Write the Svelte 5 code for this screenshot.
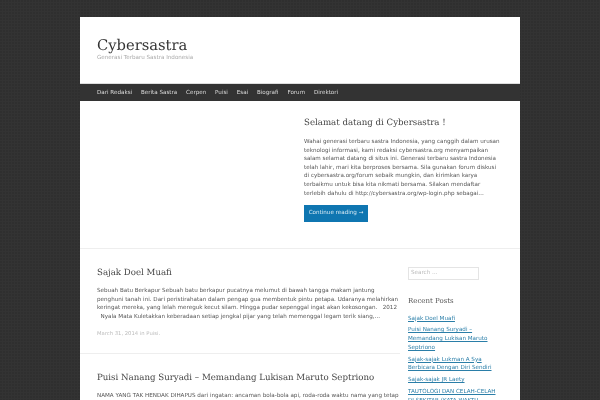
<script>
  const menu = ['Dari Redaksi', 'Berita Sastra', 'Cerpen', 'Puisi', 'Esai', 'Biografi', 'Forum', 'Direktori'];
  const recent = [
    'Sajak Doel Muafi',
    'Puisi Nanang Suryadi – Memandang Lukisan Maruto Septriono',
    'Sajak-sajak Lukman A Sya Berbicara Dengan Diri Sendiri',
    'Sajak-sajak JR Laety',
    'TAUTOLOGI DAN CELAH-CELAH DI SEKITAR (KATA WAKTU'
  ];
</script>

<div class="site">
  <header class="masthead">
    <h1>Cybersastra</h1>
    <p class="tagline">Generasi Terbaru Sastra Indonesia</p>
  </header>
  <nav class="menu">
    {#each menu as item}
      <span>{item}</span>
    {/each}
  </nav>
  <section class="featured">
    <div class="thumb"></div>
    <div class="intro">
      <h2>Selamat datang di Cybersastra !</h2>
      <p>Wahai generasi terbaru sastra Indonesia, yang canggih dalam urusan<br>teknologi informasi, kami redaksi cybersastra.org menyampaikan<br>salam selamat datang di situs ini. Generasi terbaru sastra Indonesia<br>telah lahir, mari kita berproses bersama. Sila gunakan forum diskusi<br>di cybersastra.org/forum sebaik mungkin, dan kirimkan karya<br>terbaikmu untuk bisa kita nikmati bersama. Silakan mendaftar<br>terlebih dahulu di http://cybersastra.org/wp-login.php sebagai…</p>
      <span class="more">Continue reading →</span>
    </div>
  </section>
  <div class="columns">
    <main>
      <article>
        <h2>Sajak Doel Muafi</h2>
        <p>Sebuah Batu Berkapur Sebuah batu berkapur pucatnya melumut di bawah tangga makam jantung<br>penghuni tanah ini. Dari peristirahatan dalam pengap gua membentuk pintu petapa. Udaranya melahirkan<br>keringat mereka, yang lelah mereguk kecut silam. Hingga pudar sepenggal ingat akan kekosongan. &nbsp; 2012<br>&nbsp; Nyala Mata Kuletakkan keberadaan setiap jengkal pijar yang telah memenggal legam terik siang,…</p>
        <div class="meta">March 31, 2014 in Puisi.</div>
      </article>
      <article>
        <h2>Puisi Nanang Suryadi – Memandang Lukisan Maruto Septriono</h2>
        <p>NAMA YANG TAK HENDAK DIHAPUS dari ingatan: ancaman bola-bola api, roda-roda waktu nama yang tetap</p>
      </article>
    </main>
    <aside>
      <div class="search">Search …</div>
      <h3>Recent Posts</h3>
      <ul>
        {#each recent as post}
          <li>{post}</li>
        {/each}
      </ul>
    </aside>
  </div>
</div>

<style>
  :global(body) {
    background-color: #333;
    background-image: radial-gradient(circle at 1px 1px, #2f2f2f 0.8px, transparent 1px);
    background-size: 3px 3px;
    height: 400px;
    overflow: hidden;
    font-family: "DejaVu Sans", sans-serif;
    text-rendering: geometricPrecision;
  }

  .site {
    width: 440px;
    margin: 17px auto 0;
    background: #fff;
    height: 383px;
    overflow: hidden;
    filter: blur(0.35px);
  }

  .masthead {
    height: 67px;
    padding: 21px 17px 0;
    box-sizing: border-box;
    border-bottom: 1px solid #ddd;
  }

  h1, h2, h3 {
    font-family: "DejaVu Serif", serif;
    font-weight: 400;
    margin: 0;
    color: #333;
  }

  h1 {
    font-size: 14.7px;
    line-height: 16px;
  }

  .tagline {
    margin: 0;
    font-size: 5.6px;
    line-height: 8px;
    color: #aaa;
  }

  .menu {
    display: flex;
    gap: 8.8px;
    height: 17px;
    padding: 0 17px;
    align-items: center;
    background: #333;
    color: #ddd;
    font-size: 5.6px;
  }

  .featured {
    display: flex;
    height: 147px;
    border-bottom: 1px solid #eee;
  }

  .thumb {
    width: 224px;
    flex: none;
  }

  .intro {
    padding-top: 16px;
  }

  .intro h2 {
    font-size: 8.65px;
    line-height: 12px;
    color: #444;
  }

  p {
    font-size: 5.62px;
    line-height: 8.6px;
    color: #555;
    margin: 0;
    white-space: nowrap;
  }

  .intro p {
    margin-top: 9px;
  }

  .more {
    display: inline-block;
    margin-top: 7px;
    width: 64px;
    height: 17px;
    line-height: 17px;
    text-align: center;
    background: #0f76b1;
    color: #d8eaf4;
    font-size: 5.6px;
    white-space: nowrap;
  }

  .columns {
    display: flex;
  }

  main {
    width: 320px;
    flex: none;
  }

  article {
    padding: 18px 10px 15px 17px;
    border-bottom: 1px solid #eee;
  }

  article h2 {
    font-size: 8.65px;
    line-height: 12px;
    color: #444;
    white-space: nowrap;
  }

  article p {
    margin-top: 8px;
  }

  .meta {
    margin-top: 10px;
    font-size: 5.27px;
    line-height: 7px;
    color: #bbb;
  }

  aside {
    padding: 18px 0 0 8px;
    width: 92px;
    flex: none;
  }

  .search {
    width: 71px;
    height: 13px;
    box-sizing: border-box;
    border: 1px solid #e4e4e4;
    font-size: 5.6px;
    line-height: 11px;
    padding-left: 2px;
    color: #bbb;
  }

  h3 {
    margin-top: 16px;
    font-size: 7px;
    line-height: 10px;
    color: #555;
  }

  ul {
    list-style: none;
    margin: 8.5px 0 0;
    padding: 0;
    width: 90px;
  }

  li {
    font-size: 5.62px;
    line-height: 8.6px;
    margin-bottom: 3.4px;
    color: #2a7ea8;
    text-decoration: underline;
  }
</style>
